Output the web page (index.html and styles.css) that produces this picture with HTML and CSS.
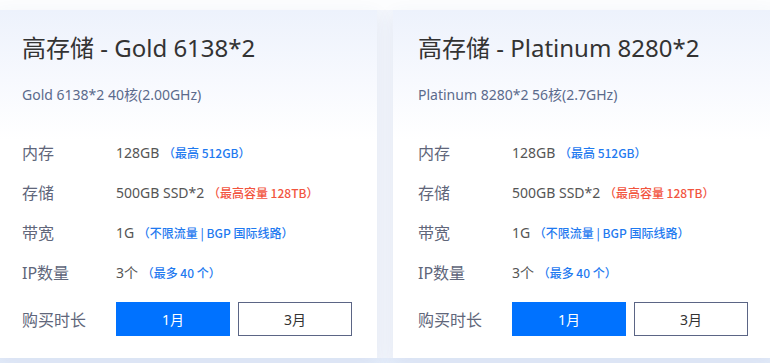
FILE: index.html
```html
<!DOCTYPE html>
<html lang="zh-CN">
<head>
  <meta charset="UTF-8">
  <title>高存储服务器</title>
  <link rel="stylesheet" href="styles.css">
</head>
<body>
  <div class="cards">
    <div class="card">
      <h2 class="title">高存储 - Gold 6138*2</h2>
      <p class="sub">Gold 6138*2 40核(2.00GHz)</p>
      <div class="row"><span class="label">内存</span><span class="val">128GB <em class="note">（最高 512GB）</em></span></div>
      <div class="row"><span class="label">存储</span><span class="val">500GB SSD*2 <em class="note red">（最高容量 128TB）</em></span></div>
      <div class="row"><span class="label">带宽</span><span class="val">1G <em class="note">（不限流量 | BGP 国际线路）</em></span></div>
      <div class="row"><span class="label">IP数量</span><span class="val">3个 <em class="note">（最多 40 个）</em></span></div>
      <div class="row buy">
        <span class="label">购买时长</span>
        <div class="opts"><button class="opt on">1月</button><button class="opt">3月</button></div>
      </div>
    </div>
    <div class="card">
      <h2 class="title">高存储 - Platinum 8280*2</h2>
      <p class="sub">Platinum 8280*2 56核(2.7GHz)</p>
      <div class="row"><span class="label">内存</span><span class="val">128GB <em class="note">（最高 512GB）</em></span></div>
      <div class="row"><span class="label">存储</span><span class="val">500GB SSD*2 <em class="note red">（最高容量 128TB）</em></span></div>
      <div class="row"><span class="label">带宽</span><span class="val">1G <em class="note">（不限流量 | BGP 国际线路）</em></span></div>
      <div class="row"><span class="label">IP数量</span><span class="val">3个 <em class="note">（最多 40 个）</em></span></div>
      <div class="row buy">
        <span class="label">购买时长</span>
        <div class="opts"><button class="opt on">1月</button><button class="opt">3月</button></div>
      </div>
    </div>
  </div>
</body>
</html>
```

FILE: styles.css
```css
body {
  margin: 0;
  font-family: "Noto Sans", "Noto Sans CJK SC", sans-serif;
  background: linear-gradient(to bottom, #fcfdfe 0, #fcfdfe 10px, #f3f6fc 10px, #f3f6fc 358px, #e5edfa 358px);
  height: 363px;
  overflow: hidden;
}
.cards {
  display: flex;
  gap: 16px;
  margin-left: -3px;
  padding-top: 10px;
}
.card {
  flex: 0 0 378px;
  height: 348px;
  box-sizing: border-box;
  padding: 22px 25px 0;
  background: linear-gradient(to bottom, #edf2fc 0, #f7f9fe 70px, #fff 130px);
  box-shadow: 0 6px 18px rgba(60, 90, 150, 0.08);
}
.title {
  margin: 0;
  font-size: 24px;
  font-weight: 400;
  line-height: 32px;
  color: #333;
}
.sub {
  margin: 21px 0 27px;
  font-size: 14px;
  line-height: 20px;
  color: #5b6a8c;
}
.row {
  display: flex;
  align-items: center;
  height: 40px;
}
.label {
  width: 94px;
  flex: none;
  font-size: 16px;
  color: #60667a;
}
.val {
  font-size: 14px;
  color: #555;
}
.note {
  font-family: "Noto Sans CJK SC", sans-serif;
  font-style: normal;
  font-weight: 500;
  font-size: 12px;
  color: #1f7af0;
}
.note.red { color: #f2553f; }
.buy {
  margin-top: 10px;
  height: 34px;
}
.opts {
  display: flex;
  gap: 8px;
}
.opt {
  width: 114px;
  height: 34px;
  font-family: inherit;
  font-size: 14px;
  color: #333;
  background: #fff;
  border: 1px solid #5b6585;
  padding: 0;
}
.opt.on {
  color: #fff;
  background: #0072ff;
  border-color: #0072ff;
}
```
